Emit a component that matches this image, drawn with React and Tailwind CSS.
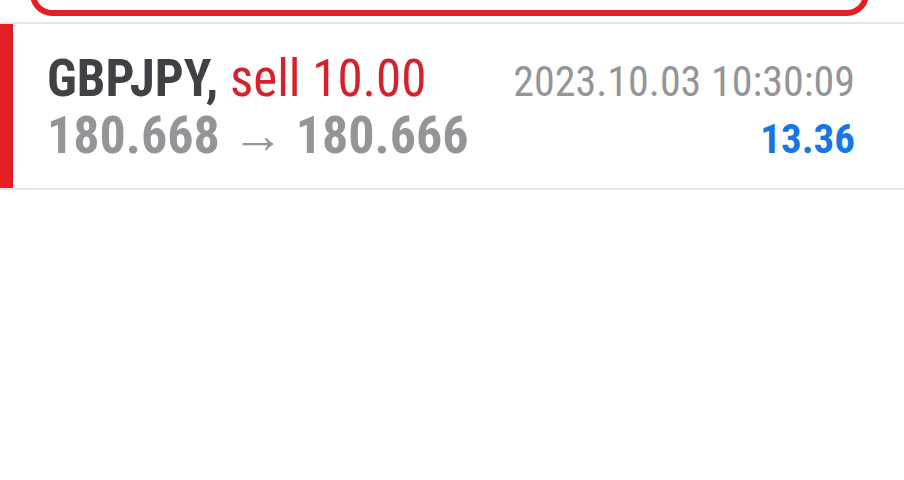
export default function App() {
  return (
    <div
      className="w-[904px] h-[480px] overflow-hidden bg-white"
      style={{ fontFamily: "'Roboto Condensed', Roboto, sans-serif" }}
    >
      {/* bottom of the highlighted card above, scrolled mostly out of view */}
      <div className="ml-[30px] w-[839px] h-[60px] -mt-[44px] rounded-[22px] border-[6px] border-[#e31e24]" />

      <div className="mt-[6px] border-y-2 border-[#e3e4e6] flex">
        <div className="w-[13px] bg-[#e31e24]" />
        <div className="flex-1 pl-[34px] pr-[49px] pt-[25px] pb-[23px] leading-[59px]">
          <div className="flex justify-between items-baseline h-[57px]">
            <div className="text-[51px]">
              <span className="font-bold text-[#404045]">GBPJPY,</span>{" "}
              <span className="text-[#d6202a]">sell 10.00</span>
            </div>
            <div className="text-[42px] text-[#939598]">2023.10.03 10:30:09</div>
          </div>
          <div className="flex justify-between items-baseline h-[59px]">
            <div className="text-[52px] font-bold text-[#939598]">
              180.668 <span className="font-normal">→</span> 180.666
            </div>
            <div className="text-[41px] font-bold text-[#1477e4]">13.36</div>
          </div>
        </div>
      </div>
    </div>
  );
}
